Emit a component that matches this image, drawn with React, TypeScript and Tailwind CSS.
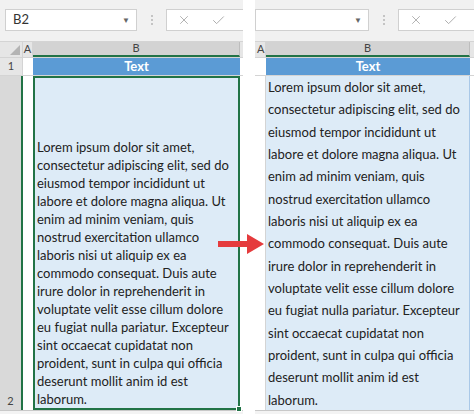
import { X, Check } from "lucide-react";

const LINES = [
  "Lorem ipsum dolor sit amet,",
  "consectetur adipiscing elit, sed do",
  "eiusmod tempor incididunt ut",
  "labore et dolore magna aliqua. Ut",
  "enim ad minim veniam, quis",
  "nostrud exercitation ullamco",
  "laboris nisi ut aliquip ex ea",
  "commodo consequat. Duis aute",
  "irure dolor in reprehenderit in",
  "voluptate velit esse cillum dolore",
  "eu fugiat nulla pariatur. Excepteur",
  "sint occaecat cupidatat non",
  "proident, sunt in culpa qui officia",
  "deserunt mollit anim id est",
  "laborum.",
];

const FONT = "font-['Lato','Liberation_Sans',sans-serif]";

function FormulaBar({ name, boxWidth, padLeft }: { name: string; boxWidth: string; padLeft: string }) {
  return (
    <div className={`flex h-[41px] items-start bg-[#f1f1f1] pt-[9px] ${padLeft}`}>
      <div className={`flex h-[22px] ${boxWidth} items-center justify-between border border-[#d0d0d0] bg-white pl-[7px] pr-[6px]`}>
        <span className="text-[13px] text-[#333]">{name}</span>
        <span className="text-[8px] text-[#666]">▼</span>
      </div>
      <div className="flex h-[22px] w-[29px] flex-col items-center justify-center gap-[2px]">
        <span className="h-[2px] w-[2px] rounded-full bg-[#b5b5b5]" />
        <span className="h-[2px] w-[2px] rounded-full bg-[#b5b5b5]" />
        <span className="h-[2px] w-[2px] rounded-full bg-[#b5b5b5]" />
      </div>
      <div className="flex h-[22px] flex-1 items-center border border-r-0 border-[#d0d0d0] bg-white pl-[10px]">
        <X className="h-[14px] w-[14px] text-[#a8a8a8]" strokeWidth={1.5} />
        <Check className="ml-[20px] h-[15px] w-[15px] text-[#a8a8a8]" strokeWidth={1.5} />
      </div>
    </div>
  );
}

function LeftSheet() {
  return (
    <div className={`flex w-[243px] flex-col ${FONT}`}>
      <FormulaBar name="B2" boxWidth="w-[132px]" padLeft="pl-[5px]" />
      {/* column headers */}
      <div className="flex h-[17px] border-y border-[#d4d4d4] bg-[#e6e6e6] text-[11px] text-[#444]">
        <div className="relative w-[23px] border-r border-[#d4d4d4]">
          <div className="absolute bottom-[2px] right-[2px] h-0 w-0 border-b-[10px] border-l-[10px] border-b-[#b4b4b4] border-l-transparent" />
        </div>
        <div className="flex w-[10px] items-center justify-center overflow-hidden border-r border-[#d4d4d4]">A</div>
        <div className="flex w-[207px] items-center justify-center border-b-2 border-r border-b-[#217346] border-r-[#bdbdbd] bg-[#d3d3d3]">B</div>
        <div className="flex-1" />
      </div>
      {/* row 1 */}
      <div className="flex h-[18px] border-b border-[#d4d4d4]">
        <div className="flex w-[23px] items-center justify-center border-r border-[#d4d4d4] bg-[#e6e6e6] text-[11px] text-[#444]">1</div>
        <div className="w-[10px] bg-white" />
        <div className="flex w-[207px] items-center justify-center bg-[#5b9bd5] text-[13px] font-bold text-white">Text</div>
        <div className="flex-1 bg-white" />
      </div>
      {/* row 2 */}
      <div className="flex h-[334px]">
        <div className="flex w-[23px] items-end justify-center border-r-2 border-[#217346] bg-[#d9d9d9] pb-[1px] text-[11px] text-[#444]">2</div>
        <div className="w-[10px] bg-white" />
        <div className="relative flex w-[207px] flex-col justify-end border-2 border-[#217346] bg-[#ddebf7] pl-[2px] text-[13px] leading-[18px] text-[#222]">
          {LINES.map((l) => (
            <div key={l} className="whitespace-nowrap">{l}</div>
          ))}
          <div className="absolute -bottom-[4px] -right-[4px] h-[6px] w-[6px] border border-white bg-[#217346]" />
        </div>
        <div className="flex-1 bg-white" />
      </div>
      <div className="h-[4px] border-t border-[#c8c8c8] bg-[#f3f3f3]" />
    </div>
  );
}

function RightSheet() {
  return (
    <div className={`flex w-[219px] flex-col ${FONT}`}>
      <FormulaBar name="" boxWidth="w-[114px]" padLeft="pl-0" />
      <div className="flex h-[17px] border-y border-[#d4d4d4] bg-[#e6e6e6] text-[11px] text-[#444]">
        <div className="flex w-[11px] items-center justify-start overflow-hidden border-r border-[#d4d4d4] pl-[2px]">A</div>
        <div className="flex w-[204px] items-center justify-center border-b-2 border-r border-b-[#217346] border-r-[#bdbdbd] bg-[#d3d3d3]">B</div>
        <div className="flex-1" />
      </div>
      <div className="flex h-[18px] border-b border-[#d4d4d4]">
        <div className="w-[11px] bg-white" />
        <div className="flex w-[204px] items-center justify-center bg-[#5b9bd5] text-[13px] font-bold text-white">Text</div>
        <div className="flex-1 bg-white" />
      </div>
      <div className="flex h-[334px]">
        <div className="w-[11px] border-r border-[#d4d4d4] bg-white" />
        <div className="flex w-[204px] flex-col justify-between border-r border-[#a9c8e8] bg-[#ddebf7] pb-[1px] pl-[2px] pt-[2px] text-[13px] leading-[18px] text-[#222]">
          {LINES.map((l) => (
            <div key={l} className="whitespace-nowrap">{l}</div>
          ))}
        </div>
        <div className="flex-1 bg-white" />
      </div>
      <div className="h-[4px] border-t border-[#c8c8c8] bg-[#f3f3f3]" />
    </div>
  );
}

export default function App() {
  return (
    <div className="relative flex h-[414px] w-[474px] overflow-hidden bg-white">
      <LeftSheet />
      <div className="w-[12px] bg-white" />
      <RightSheet />
      <svg className="absolute left-[216px] top-[232px]" width="50" height="24" viewBox="0 0 50 24">
        <path d="M2 9 H31 V2 L48 12 L31 22 V15 H2 Z" fill="#e53b3d" />
      </svg>
    </div>
  );
}
